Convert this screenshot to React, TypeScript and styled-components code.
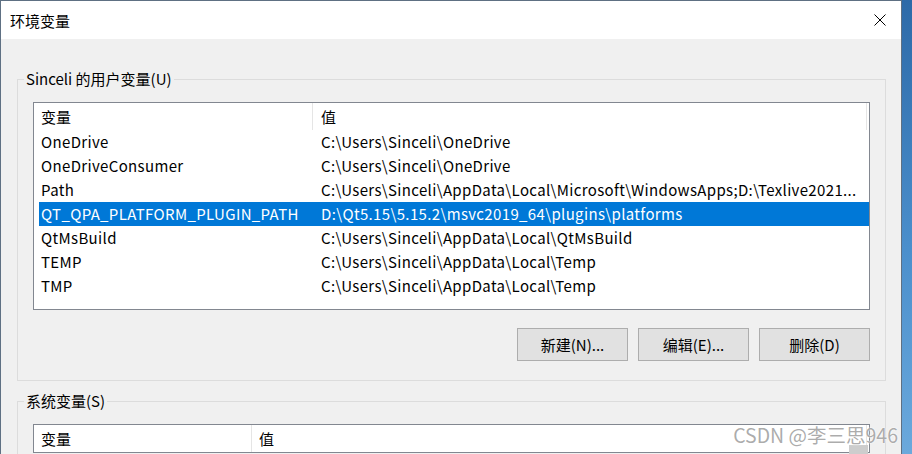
import styled, { createGlobalStyle } from "styled-components";

const GlobalStyle = createGlobalStyle`
  html, body {
    margin: 0;
    padding: 0;
  }
  body {
    font-family: "Noto Sans CJK SC", "Noto Sans", sans-serif;
    color: #000;
  }
`;

const Desktop = styled.div`
  width: 912px;
  height: 454px;
  display: flex;
  overflow: hidden;
  position: relative;
  background: linear-gradient(180deg, #2d6aa8 0%, #4b8fcc 55%, #6ba9dc 100%);
`;

const Window = styled.div`
  width: 902px;
  height: 100%;
  box-sizing: border-box;
  border: 1px solid #5e7083;
  border-bottom: none;
  background: #f0f0f0;
  display: flex;
  flex-direction: column;
  overflow: hidden;
`;

const TitleBar = styled.div`
  height: 38px;
  flex: none;
  background: #fff;
  display: flex;
  align-items: center;
  justify-content: space-between;
  padding: 0 15px 0 9px;
  font-size: 15px;
`;

const CloseButton = styled.div`
  width: 12px;
  height: 12px;
  display: flex;

  svg {
    display: block;
  }
`;

const Content = styled.div`
  padding: 0 15px 0 16px;
  display: flex;
  flex-direction: column;
`;

const Group = styled.fieldset<{ $top: number; $padTop: number }>`
  margin: ${(p) => p.$top}px 0 0;
  padding: ${(p) => p.$padTop}px 15px 19px 15px;
  border: 1px solid #dcdcdc;
  min-width: 0;
`;

const Legend = styled.legend`
  margin-left: -9px;
  padding: 0 2px;
  font-size: 15px;
  line-height: 20px;
`;

const ListBox = styled.div<{ $height?: number }>`
  background: #fff;
  border: 1px solid #828790;
  height: ${(p) => (p.$height ? `${p.$height}px` : "auto")};
  box-sizing: border-box;
  font-size: 15px;
  position: relative;
`;

const Header = styled.div<{ $first: number }>`
  display: grid;
  grid-template-columns: ${(p) => p.$first}px 1fr;
  height: 27px;
  margin-right: 2px;
`;

const HeaderCell = styled.div<{ $pad: number }>`
  display: flex;
  align-items: center;
  padding-left: ${(p) => p.$pad}px;
  border-right: 1px solid #e5e5e5;
  white-space: nowrap;
`;

const Rows = styled.div`
  margin-left: 5px;
`;

const Row = styled.div<{ $selected?: boolean }>`
  display: grid;
  grid-template-columns: 274px 1fr;
  height: 24px;
  align-items: center;
  background: ${(p) => (p.$selected ? "#0078d7" : "transparent")};
  color: ${(p) => (p.$selected ? "#fff" : "#000")};
`;

const Cell = styled.div<{ $pad: number }>`
  padding-left: ${(p) => p.$pad}px;
  white-space: nowrap;
  overflow: hidden;
  letter-spacing: 0.35px;
  line-height: 22px;
`;

const ButtonRow = styled.div`
  display: flex;
  justify-content: flex-end;
  gap: 10px;
  margin-top: 18px;
`;

const Button = styled.div`
  width: 111px;
  height: 33px;
  box-sizing: border-box;
  background: #e1e1e1;
  border: 1px solid #adadad;
  display: flex;
  align-items: center;
  justify-content: center;
  font-size: 15px;
`;

const ScrollThumb = styled.div`
  position: absolute;
  right: 1px;
  top: 20px;
  width: 19px;
  height: 20px;
  background: #cdcdcd;
`;

const Watermark = styled.div`
  position: absolute;
  right: 14px;
  bottom: 5px;
  font-size: 19.5px;
  color: rgba(135, 135, 135, 0.7);
  text-shadow: 0 0 2px #fff, 0 0 1px #fff;
  font-family: "Noto Sans CJK SC", "Noto Sans", sans-serif;
`;

const userVars: [string, string][] = [
  ["OneDrive", "C:\\Users\\Sinceli\\OneDrive"],
  ["OneDriveConsumer", "C:\\Users\\Sinceli\\OneDrive"],
  [
    "Path",
    "C:\\Users\\Sinceli\\AppData\\Local\\Microsoft\\WindowsApps;D:\\Texlive2021...",
  ],
  ["QT_QPA_PLATFORM_PLUGIN_PATH", "D:\\Qt5.15\\5.15.2\\msvc2019_64\\plugins\\platforms"],
  ["QtMsBuild", "C:\\Users\\Sinceli\\AppData\\Local\\QtMsBuild"],
  ["TEMP", "C:\\Users\\Sinceli\\AppData\\Local\\Temp"],
  ["TMP", "C:\\Users\\Sinceli\\AppData\\Local\\Temp"],
];

export default function App() {
  const selected = "QT_QPA_PLATFORM_PLUGIN_PATH";

  return (
    <>
      <GlobalStyle />
      <Desktop>
        <Window>
          <TitleBar>
            <span>环境变量</span>
            <CloseButton>
              <svg width="12" height="12" viewBox="0 0 12 12">
                <path d="M0.5 0.5 L11.5 11.5 M11.5 0.5 L0.5 11.5" stroke="#000" strokeWidth="1" />
              </svg>
            </CloseButton>
          </TitleBar>
          <Content>
            <Group $top={30} $padTop={13}>
              <Legend>Sinceli 的用户变量(U)</Legend>
              <ListBox $height={208}>
                <Header $first={279}>
                  <HeaderCell $pad={7}>变量</HeaderCell>
                  <HeaderCell $pad={8}>值</HeaderCell>
                </Header>
                <Rows>
                  {userVars.map(([name, value]) => (
                    <Row key={name} $selected={name === selected}>
                      <Cell $pad={2}>{name}</Cell>
                      <Cell $pad={8}>{value}</Cell>
                    </Row>
                  ))}
                </Rows>
              </ListBox>
              <ButtonRow>
                <Button>新建(N)...</Button>
                <Button>编辑(E)...</Button>
                <Button>删除(D)</Button>
              </ButtonRow>
            </Group>
            <Group $top={10} $padTop={13}>
              <Legend>系统变量(S)</Legend>
              <ListBox>
                <Header $first={218}>
                  <HeaderCell $pad={7}>变量</HeaderCell>
                  <HeaderCell $pad={7}>值</HeaderCell>
                </Header>
                <ScrollThumb />
              </ListBox>
            </Group>
          </Content>
        </Window>
        <Watermark>CSDN @李三思946</Watermark>
      </Desktop>
    </>
  );
}
